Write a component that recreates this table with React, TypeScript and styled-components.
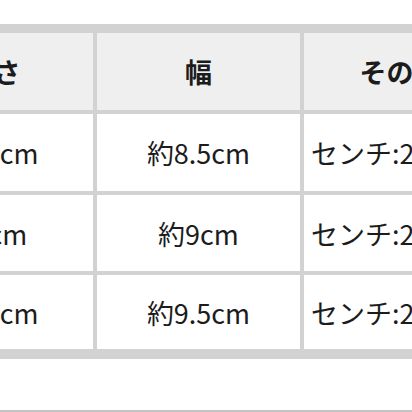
import React from "react";
import styled, { createGlobalStyle } from "styled-components";

const GlobalStyle = createGlobalStyle`
  html, body {
    margin: 0;
    padding: 0;
    background: #ffffff;
  }
  body {
    font-family: "Noto Sans CJK JP", "Noto Sans", sans-serif;
    color: #1c1c1c;
    overflow: hidden;
  }
`;

const Page = styled.div`
  width: 412px;
  height: 412px;
  overflow: hidden;
  padding-top: 24px;
  box-sizing: border-box;
  display: flex;
  flex-direction: column;
`;

const SizeTable = styled.div`
  display: grid;
  grid-template-columns: 227px 203px 192px;
  grid-template-rows: 77px 77px 76px 74px;
  gap: 4px;
  padding: 9px 0 10px;
  background: #d2d2d2;
  margin-left: -134px;
  width: max-content;
`;

const Cell = styled.div<{ $align?: "left" | "center" }>`
  display: flex;
  align-items: center;
  justify-content: ${(p) => (p.$align === "left" ? "flex-start" : "center")};
  padding: 0 ${(p) => (p.$align === "left" ? "7px" : "0")};
  background: #ffffff;
  font-size: 27px;
  white-space: nowrap;
  overflow: hidden;
`;

const HeadCell = styled(Cell)`
  background: #efefef;
  font-weight: 700;
  &:first-child {
    padding-left: 28px;
  }
`;

const Footer = styled.div`
  margin-top: 51px;
  border-top: 2px solid #c4c4c4;
`;

const headers = ["長さ", "幅", "その他"];

const rows = [
  ["約14.5cm", "約8.5cm", "センチ:22.5cm"],
  ["約14cm", "約9cm", "センチ:23cm"],
  ["約14.5cm", "約9.5cm", "センチ:23.5cm"],
];

export default function App() {
  return (
    <>
      <GlobalStyle />
      <Page>
        <SizeTable>
          {headers.map((h) => (
            <HeadCell key={h}>{h}</HeadCell>
          ))}
          {rows.map((row, i) =>
            row.map((text, j) => (
              <Cell key={`${i}-${j}`} $align={j === 2 ? "left" : "center"}>
                {text}
              </Cell>
            ))
          )}
        </SizeTable>
        <Footer />
      </Page>
    </>
  );
}
